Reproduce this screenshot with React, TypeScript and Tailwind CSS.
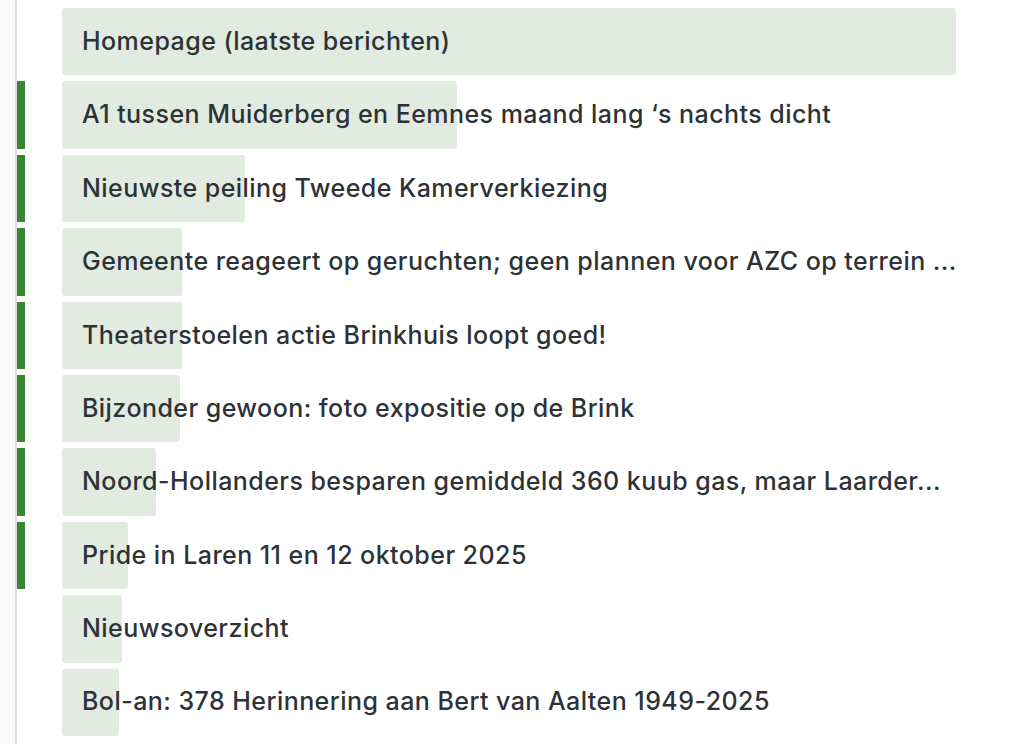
const rows: { title: string; bar: number; marked: boolean }[] = [
  { title: "Homepage (laatste berichten)", bar: 894, marked: false },
  { title: "A1 tussen Muiderberg en Eemnes maand lang ‘s nachts dicht", bar: 395, marked: true },
  { title: "Nieuwste peiling Tweede Kamerverkiezing", bar: 183, marked: true },
  { title: "Gemeente reageert op geruchten; geen plannen voor AZC op terrein ...", bar: 120, marked: true },
  { title: "Theaterstoelen actie Brinkhuis loopt goed!", bar: 120, marked: true },
  { title: "Bijzonder gewoon: foto expositie op de Brink", bar: 118, marked: true },
  { title: "Noord-Hollanders besparen gemiddeld 360 kuub gas, maar Laarder...", bar: 94, marked: true },
  { title: "Pride in Laren 11 en 12 oktober 2025", bar: 66, marked: true },
  { title: "Nieuwsoverzicht", bar: 60, marked: false },
  { title: "Bol-an: 378 Herinnering aan Bert van Aalten 1949-2025", bar: 57, marked: false },
];

export default function App() {
  return (
    <div className="flex h-[744px] w-[1024px] overflow-hidden bg-white font-['Inter','Liberation_Sans',sans-serif] text-[#2d3237]">
      <div className="w-[15px] shrink-0 bg-[#f9f9f9]" />
      <div className="w-[2px] shrink-0 bg-[#dedede]" />
      <div className="flex flex-1 flex-col gap-[6px] pt-[8px] pr-[68px]">
        {rows.map((r) => (
          <div key={r.title} className="flex h-[67.4px] shrink-0">
            <div className={`w-[8px] shrink-0 ${r.marked ? "bg-[#3a8531]" : ""}`} />
            <div className="relative ml-[37px] flex min-w-0 flex-1 items-center">
              {/* voortgangsbalk */}
              <div
                className="absolute inset-y-0 left-0 rounded-[3px] bg-[#e1ebdf]"
                style={{ width: r.bar }}
              />
              <span className="relative whitespace-nowrap pl-[20px] text-[25px] font-medium leading-normal tracking-[0.45px]">
                {r.title}
              </span>
            </div>
          </div>
        ))}
      </div>
    </div>
  );
}
